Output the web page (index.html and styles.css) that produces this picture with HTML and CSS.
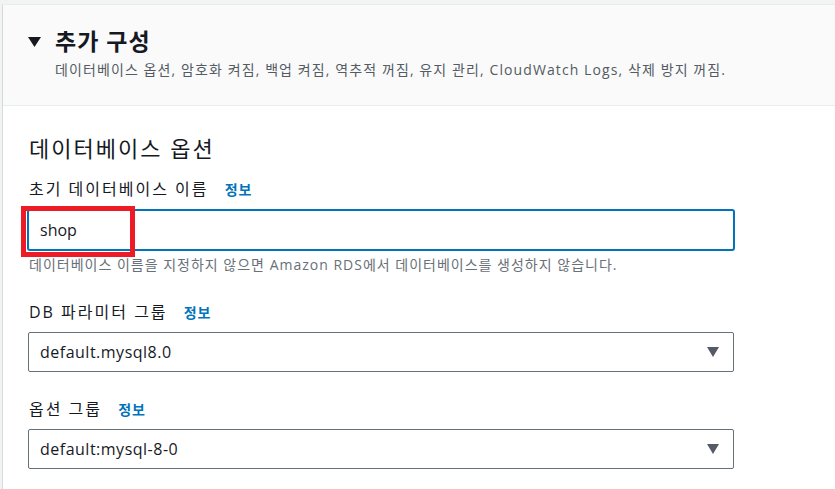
FILE: index.html
```html
<!DOCTYPE html>
<html lang="ko">
<head>
    <meta charset="UTF-8">
    <meta name="viewport" content="width=device-width, initial-scale=1.0">
    <title>추가 구성</title>
    <link rel="stylesheet" href="styles.css">
</head>
<body>
    <div class="panel">
        <div class="panel-header">
            <div class="title-row">
                <svg class="caret" width="13" height="10" viewBox="0 0 13 10"><polygon points="0,0 13,0 6.5,10" fill="#16191f"/></svg>
                <h1>추가 구성</h1>
            </div>
            <p class="summary">데이터베이스 옵션, 암호화 켜짐, 백업 켜짐, 역추적 꺼짐, 유지 관리, CloudWatch Logs, 삭제 방지 꺼짐.</p>
        </div>

        <div class="panel-body">
            <h2>데이터베이스 옵션</h2>

            <div class="field">
                <label>초기 데이터베이스 이름 <a href="#">정보</a></label>
                <div class="input-wrap">
                    <input type="text" class="text-input" value="shop">
                    <span class="highlight"></span>
                </div>
                <p class="hint">데이터베이스 이름을 지정하지 않으면 Amazon RDS에서 데이터베이스를 생성하지 않습니다.</p>
            </div>

            <div class="field">
                <label>DB 파라미터 그룹 <a href="#">정보</a></label>
                <div class="select">
                    <span>default.mysql8.0</span>
                    <svg width="12" height="10" viewBox="0 0 12 10"><polygon points="0,0 12,0 6,10" fill="#545b64"/></svg>
                </div>
            </div>

            <div class="field">
                <label>옵션 그룹 <a href="#">정보</a></label>
                <div class="select">
                    <span>default:mysql-8-0</span>
                    <svg width="12" height="10" viewBox="0 0 12 10"><polygon points="0,0 12,0 6,10" fill="#545b64"/></svg>
                </div>
            </div>
        </div>
    </div>
</body>
</html>
```

FILE: styles.css
```css
body {
    margin: 0;
    background-color: #f2f3f3;
    font-family: 'Open Sans', 'Noto Sans CJK KR', sans-serif;
    color: #16191f;
}
.panel {
    margin: 4px 0 0 2px;
    border-top: 1px solid #eaeded;
    border-left: 1px solid #d5dbdb;
    background: white;
    height: 484px;
}
.panel-header {
    background-color: #fafafa;
    border-bottom: 1px solid #eaeded;
    padding: 21px 0 25px 25px;
}
.title-row {
    display: flex;
    align-items: center;
    gap: 14px;
}
.caret {
    margin-top: 1px;
}
h1 {
    margin: 0;
    font-size: 23px;
    line-height: 30px;
    font-weight: bold;
    letter-spacing: 1px;
}
.summary {
    margin: 4px 0 0 27px;
    font-size: 14px;
    line-height: 20px;
    letter-spacing: 1.1px;
    color: #545b64;
}
.panel-body {
    padding: 27px 0 0 24px;
    width: 708px;
}
h2 {
    margin: 0 0 15px 2px;
    font-size: 22px;
    line-height: 30px;
    font-weight: normal;
    letter-spacing: 2px;
}
.field {
    margin-bottom: 26px;
}
label {
    display: block;
    margin: 0 0 8px 2px;
    font-size: 16px;
    line-height: 22px;
    letter-spacing: 2px;
}
label a {
    margin-left: 10px;
    color: #0073bb;
    font-weight: bold;
    font-size: 14px;
    letter-spacing: 1px;
    text-decoration: none;
}
.input-wrap {
    position: relative;
}
.text-input {
    display: block;
    box-sizing: border-box;
    width: 708px;
    height: 42px;
    margin: 0;
    padding: 0 11px;
    border: 2px solid #0073bb;
    border-radius: 3px;
    font-family: inherit;
    font-size: 16px;
    color: #16191f;
    outline: none;
}
.highlight {
    position: absolute;
    left: -6px;
    top: -3px;
    width: 104px;
    height: 41px;
    border: 5px solid #ed1c24;
}
.hint {
    margin: 4px 0 0 2px;
    font-size: 14px;
    line-height: 20px;
    letter-spacing: 1px;
    color: #687078;
}
.select {
    box-sizing: border-box;
    height: 40px;
    margin-left: 1px;
    width: 706px;
    display: flex;
    align-items: center;
    justify-content: space-between;
    padding: 0 14px 0 11px;
    border: 1px solid #687078;
    border-radius: 2px;
    font-size: 16px;
    letter-spacing: 0.5px;
}
```
